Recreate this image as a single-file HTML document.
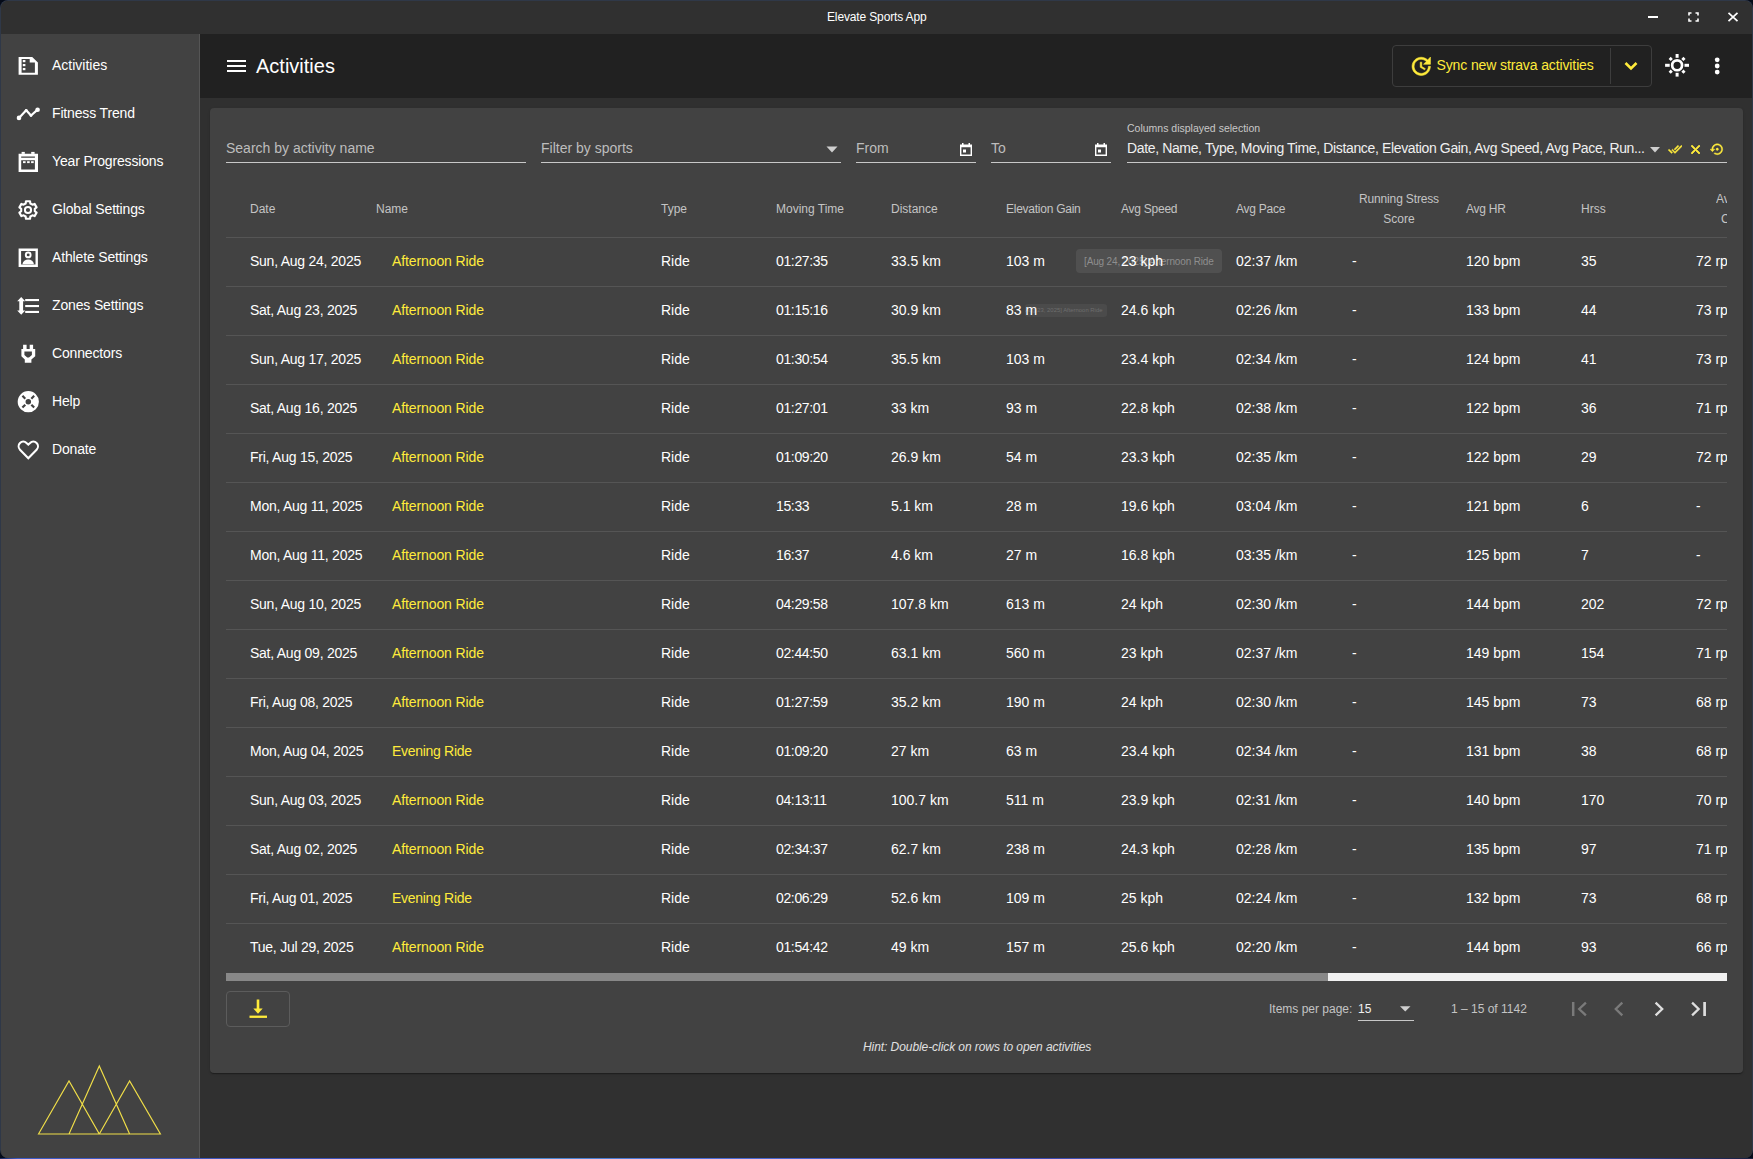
<!DOCTYPE html>
<html><head><meta charset="utf-8">
<style>
*{box-sizing:border-box;margin:0;padding:0}
html,body{width:1753px;height:1159px;overflow:hidden;background:#050b18;font-family:"Liberation Sans",sans-serif}
#win{position:absolute;left:1px;top:1px;width:1751px;height:1157px;background:#303030;border-radius:7px;overflow:hidden}
.t{position:absolute;white-space:nowrap;line-height:0;height:0}
.t>span{}
.ic{position:absolute}
#title{position:absolute;left:0;top:0;width:1751px;height:33px;background:#303030}
#side{position:absolute;left:0;top:33px;width:199px;height:1124px;background:#424242;border-right:1px solid #555}
#tool{position:absolute;left:199px;top:33px;width:1552px;height:64px;background:#212121}
#card{position:absolute;left:209px;top:107px;width:1533px;height:965px;background:#424242;border-radius:4px;box-shadow:0 2px 1px -1px rgba(0,0,0,.2),0 1px 1px 0 rgba(0,0,0,.14),0 1px 3px 0 rgba(0,0,0,.12)}
.hl{position:absolute;left:226px;width:1501px;height:1px;background:#555}
.clipc{clip-path:inset(-20px 0 -20px 0)}
#clipbox{position:absolute;left:0;top:0;width:1727px;height:1159px;overflow:hidden}
</style></head><body>
<div style="position:absolute;left:0;top:1158px;width:1753px;height:1px;background:linear-gradient(90deg,#1a2a60 0%,#3d5cc8 1%,#3a52b8 20%,#4a8ad0 30%,#4a6ed8 40%,#3a4ab0 60%,#5a8ac8 75%,#3a50b8 90%,#1a2040 100%)"></div>
<div style="position:absolute;left:0;top:0;width:1753px;height:1158px;border-radius:8px;background:#2f3848"></div>
<div id="win">
<div id="title"></div>
<div id="side"></div>
<div id="tool"></div>
<div id="card"></div>
</div>
<div id="abs" style="position:absolute;left:0;top:0;width:1753px;height:1159px">
<div class="t " style="left:827px;top:16.84px;font-size:12px;color:#ffffff;letter-spacing:-0.14px">Elevate Sports App</div>
<div class="t " style="left:256px;top:66.07px;font-size:20px;color:#ffffff;">Activities</div>
<div class="hl" style="top:237px"></div>
<div style="position:absolute;left:227px;top:60px;width:19px;height:2px;background:#fff"></div>
<div style="position:absolute;left:227px;top:65px;width:19px;height:2px;background:#fff"></div>
<div style="position:absolute;left:227px;top:70px;width:19px;height:2px;background:#fff"></div>
<div style="position:absolute;left:1648px;top:16px;width:10px;height:2px;background:#fff"></div>
<svg class="ic" style="left:1688px;top:12px" width="11" height="10" viewBox="0 0 11 10" fill="none" stroke="#fff" stroke-width="1.6"><path d="M1 3.5V1h2.5M7.5 1H10v2.5M10 6.5V9H7.5M3.5 9H1V6.5"/></svg>
<svg class="ic" style="left:1727px;top:12px" width="12" height="10" viewBox="0 0 12 10" fill="none" stroke="#fff" stroke-width="1.7"><path d="M1.5 0.8L10.5 9.2M10.5 0.8L1.5 9.2"/></svg>
<div style="position:absolute;left:1392px;top:45px;width:260px;height:42px;border:1px solid #3d3d3d;border-radius:4px"></div>
<div style="position:absolute;left:1610px;top:48px;width:1px;height:36px;background:#3d3d3d"></div>
<svg class="ic" style="left:1409px;top:54px" width="24.5" height="24.5" viewBox="0 0 24 24" fill="#ffeb3b" stroke="#ffeb3b" stroke-width="0.55"><path d="M21 10.12h-6.78l2.74-2.82c-2.73-2.7-7.15-2.8-9.88-.1-2.73 2.71-2.73 7.08 0 9.79s7.15 2.71 9.88 0C18.32 15.65 19 14.08 19 12.1h2c0 1.980-.88 4.55-2.64 6.29-3.51 3.48-9.21 3.48-12.720 0-3.5-3.47-3.53-9.11-.02-12.58s9.14-3.47 12.65 0L21 3v7.12zM12.5 8v4.25l3.5 2.08-.72 1.21L11 13V8h1.5z"/></svg>
<div class="t " style="left:1436.5px;top:65.15px;font-size:14px;color:#ffeb3b;letter-spacing:-0.12px">Sync new strava activities</div>
<svg class="ic" style="left:1619px;top:54px" width="24" height="24" viewBox="0 0 24 24" fill="none" stroke="#ffeb3b" stroke-width="2.6"><path d="M6.5 9l5.5 5.5L17.5 9"/></svg>
<svg class="ic" style="left:1665px;top:53px" width="24" height="24" viewBox="0 0 24 24" fill="#fff"><circle cx="12.1" cy="12.3" r="4.95" fill="none" stroke="#fff" stroke-width="2.7"/><rect x="10.6" y="1" width="3" height="3.8"/><rect x="10.6" y="19.8" width="3" height="3.8"/><rect x="0.1" y="10.8" width="4.6" height="3"/><rect x="19.5" y="10.8" width="4.6" height="3"/><g transform="rotate(45 12.1 12.3)"><rect x="10.6" y="1.8" width="3" height="3"/><rect x="10.6" y="19.8" width="3" height="3"/><rect x="1.6" y="10.8" width="3" height="3"/><rect x="19.6" y="10.8" width="3" height="3"/></g></svg>
<svg class="ic" style="left:1710px;top:54px" width="14" height="24" viewBox="1710 54 14 24" fill="#fff"><circle cx="1717.2" cy="59.8" r="2.4"/><circle cx="1717.2" cy="66" r="2.4"/><circle cx="1717.2" cy="72.1" r="2.4"/></svg>
<div class="t " style="left:226px;top:148.15px;font-size:14px;color:#bdbdbd;">Search by activity name</div>
<div style="position:absolute;left:226px;top:162px;width:300px;height:1px;background:#c8c8c8"></div>
<div class="t " style="left:541px;top:148.15px;font-size:14px;color:#bdbdbd;">Filter by sports</div>
<div style="position:absolute;left:541px;top:162px;width:300px;height:1px;background:#c8c8c8"></div>
<svg class="ic" style="left:826px;top:146px" width="12" height="7" viewBox="0 0 12 7" fill="#cfcfcf"><path d="M0.5 0.5h11L6 6.5z"/></svg>
<div class="t " style="left:856px;top:148.15px;font-size:14px;color:#bdbdbd;">From</div>
<div style="position:absolute;left:856px;top:162px;width:120px;height:1px;background:#c8c8c8"></div>
<div class="t " style="left:991px;top:148.15px;font-size:14px;color:#bdbdbd;">To</div>
<div style="position:absolute;left:991px;top:162px;width:120px;height:1px;background:#c8c8c8"></div>
<svg class="ic" style="left:960px;top:143px" width="12" height="13" viewBox="0 0 12 13" fill="#fff"><path d="M2 0h1.5v1.5h5V0H10v1.5h2V13H0V1.5h2z M1.4 4.2v7.4h9.2V4.2z" fill-rule="evenodd"/><rect x="3" y="6.5" width="3" height="3"/></svg>
<svg class="ic" style="left:1095px;top:143px" width="12" height="13" viewBox="0 0 12 13" fill="#fff"><path d="M2 0h1.5v1.5h5V0H10v1.5h2V13H0V1.5h2z M1.4 4.2v7.4h9.2V4.2z" fill-rule="evenodd"/><rect x="3" y="6.5" width="3" height="3"/></svg>
<div class="t " style="left:1127px;top:128.36px;font-size:10.5px;color:#c8c8c8;">Columns displayed selection</div>
<div class="t " style="left:1127px;top:148.15px;font-size:14px;color:#f0f0f0;letter-spacing:-0.36px">Date, Name, Type, Moving Time, Distance, Elevation Gain, Avg Speed, Avg Pace, Run...</div>
<div style="position:absolute;left:1127px;top:162px;width:600px;height:1px;background:#c8c8c8"></div>
<svg class="ic" style="left:1650px;top:147px" width="10" height="6" viewBox="0 0 10 6" fill="#cfcfcf"><path d="M0 0h10L5 5.5z"/></svg>
<svg class="ic" style="left:1667.65px;top:141.6px" width="14.4" height="14.4" viewBox="0 0 24 24" fill="#ffeb3b" stroke="#ffeb3b" stroke-width="0.9"><path d="M18 7l-1.41-1.41-6.34 6.34 1.41 1.41L18 7zm4.24-1.41L11.66 16.17 7.48 12l-1.41 1.41L11.66 19l12-12-1.42-1.41zM.41 13.41L6 19l1.41-1.41L1.83 12 .41 13.41z"/></svg>
<svg class="ic" style="left:1687.85px;top:141.85px" width="15.1" height="15.1" viewBox="0 0 24 24" fill="#ffeb3b" stroke="#ffeb3b" stroke-width="1.3" stroke-linejoin="miter"><path d="M19 6.41L17.59 5 12 10.59 6.41 5 5 6.41 10.59 12 5 17.59 6.41 19 12 13.41 17.59 19 19 17.59 13.41 12z"/></svg>
<svg class="ic" style="left:1710px;top:141.6px" width="14.5" height="14.5" viewBox="0 0 24 24" fill="#ffeb3b" stroke="#ffeb3b" stroke-width="0.7"><path d="M14 12c0-1.1-.9-2-2-2s-2 .9-2 2 .9 2 2 2 2-.9 2-2zm-2-9c-4.97 0-9 4.03-9 9H0l4 4 4-4H5c0-3.870 3.13-7 7-7s7 3.13 7 7-3.13 7-7 7c-1.51 0-2.91-.49-4.060-1.3l-1.42 1.44C8.04 20.3 9.94 21 12 21c4.97 0 9-4.03 9-9s-4.03-9-9-9z"/></svg>
<div style="position:absolute;left:226px;top:973px;width:1501px;height:8px;background:#f1f1f1"></div>
<div style="position:absolute;left:226px;top:973px;width:1102px;height:8px;background:#888"></div>
<div style="position:absolute;left:226px;top:991px;width:64px;height:36px;border:1px solid #5c5c5c;border-radius:4px"></div>
<svg class="ic" style="left:246px;top:997px" width="24" height="24" viewBox="0 0 24 24" fill="#ffeb3b"><rect x="10.7" y="2.5" width="2.6" height="10"/><path d="M7.3 11.5h9.4L12 16.7z"/><rect x="3.5" y="18.6" width="17.5" height="2.3"/></svg>
<div class="t " style="left:1269px;top:1008.84px;font-size:12px;color:#c4c4c4;">Items per page:</div>
<div class="t " style="left:1358px;top:1008.84px;font-size:12px;color:#f0f0f0;">15</div>
<div style="position:absolute;left:1358px;top:1020px;width:56px;height:1px;background:#c8c8c8"></div>
<svg class="ic" style="left:1400px;top:1006px" width="11" height="6" viewBox="0 0 11 6" fill="#cfcfcf"><path d="M0 0.3h10.5L5.25 5.6z"/></svg>
<div class="t " style="left:1451px;top:1008.84px;font-size:12px;color:#c4c4c4;">1 – 15 of 1142</div>
<svg class="ic" style="left:1560px;top:990px" width="160" height="40" viewBox="1560 990 160 40" fill="none" stroke-width="2.3"><path d="M1573.2 1002V1016" stroke="#7a7a7a" stroke-width="2.5"/><path d="M1585.9 1002.7L1579.2 1009L1585.9 1015.3" stroke="#7a7a7a"/><path d="M1622.3 1002.7L1615.8 1009L1622.3 1015.3" stroke="#7a7a7a"/><path d="M1655.6 1002.7L1662.2 1009L1655.6 1015.3" stroke="#dedede"/><path d="M1692.1 1002.7L1698.6 1009L1692.1 1015.3" stroke="#dedede"/><path d="M1704.6 1002V1016" stroke="#dedede" stroke-width="2.7"/></svg>
<div class="t " style="left:863px;top:1046.84px;font-size:12px;color:#e0e0e0;font-style:italic;letter-spacing:-0.07px">Hint: Double-click on rows to open activities</div>
<svg class="ic" style="left:0;top:1040px" width="200" height="110" viewBox="0 1040 200 110" fill="none" stroke="#f0de48" stroke-width="1.15" stroke-linejoin="miter"><path d="M38.5 1134L69 1081L99.3 1134Z M69 1134L99.3 1066L129.6 1134Z M99.3 1134L129.6 1081L160.4 1134Z"/></svg>
<div style="position:absolute;left:1076px;top:249px;width:146px;height:24px;border-radius:4px;background:rgba(97,97,97,.45)"></div>
<div class="t " style="left:1084px;top:261.54px;font-size:10px;color:#8e8e8e;letter-spacing:-0.15px">[Aug 24, 2025] Afternoon Ride</div>
<div style="position:absolute;left:1025px;top:304px;width:82px;height:13px;border-radius:3px;background:rgba(97,97,97,.3);overflow:hidden"><div style="position:absolute;left:-1.5px;top:3px;font-size:5.9px;line-height:7px;white-space:nowrap;color:#6e6e6e">[Aug 23, 2025] Afternoon Ride</div></div>
<div id="clipbox">
<svg class="ic" style="left:16px;top:53px" width="24" height="24" viewBox="0 0 24 24" fill="#fff"><path d="M2.6 3.9H16.2L21.9 9.6V21.8H2.6Z M5.6 6V19.8H18.9V9.4H13.7V6Z" fill-rule="evenodd"/><rect x="6.8" y="7" width="2.6" height="2.2"/><rect x="6.8" y="11" width="2.6" height="2.2"/><rect x="6.8" y="15" width="2.6" height="2.2"/></svg>
<div class="t " style="left:52px;top:65.15px;font-size:14px;color:#ffffff;">Activities</div>
<svg class="ic" style="left:16px;top:101px" width="24" height="24" viewBox="0 0 24 24" fill="#fff"><polyline points="3,16.9 10.2,9.3 15,14.5 21.6,8.7" fill="none" stroke="#fff" stroke-width="2.2" stroke-linejoin="round"/><circle cx="3" cy="16.9" r="2.3"/><circle cx="10.2" cy="9.3" r="1.4"/><circle cx="15" cy="14.5" r="1.4"/><circle cx="21.6" cy="8.7" r="2.3"/></svg>
<div class="t " style="left:52px;top:113.15px;font-size:14px;color:#ffffff;letter-spacing:-0.15px">Fitness Trend</div>
<svg class="ic" style="left:16px;top:149px" width="24" height="24" viewBox="0 0 24 24" fill="#fff"><path d="M2.6 4.8H22V23.1H2.6Z M5.2 11.2V20.6H18.9V11.2Z M5.2 7.4V8.8H18.9V7.4Z" fill-rule="evenodd"/><rect x="5.6" y="2.9" width="3.2" height="2"/><rect x="15.2" y="2.9" width="3.4" height="2"/><rect x="7" y="12.2" width="2.6" height="1.9"/><rect x="11.1" y="12.2" width="2.6" height="1.9"/><rect x="15.1" y="12.2" width="2.6" height="1.9"/></svg>
<div class="t " style="left:52px;top:161.15px;font-size:14px;color:#ffffff;letter-spacing:-0.15px">Year Progressions</div>
<svg class="ic" style="left:16px;top:197px" width="24" height="24" viewBox="0 0 24 24" fill="#fff"><path d="M14.36 6.52 L14.02 4.23 L9.98 4.23 L9.64 6.52 L7.56 7.71 L5.42 6.86 L3.39 10.37 L5.20 11.80 L5.20 14.20 L3.39 15.63 L5.42 19.14 L7.56 18.29 L9.64 19.48 L9.98 21.77 L14.02 21.77 L14.36 19.48 L16.44 18.29 L18.58 19.14 L20.61 15.63 L18.80 14.20 L18.80 11.80 L20.61 10.37 L18.58 6.86 L16.44 7.71Z" fill="none" stroke="#fff" stroke-width="2.1" stroke-linejoin="round"/><circle cx="12" cy="13" r="3.1" fill="none" stroke="#fff" stroke-width="2"/></svg>
<div class="t " style="left:52px;top:209.15px;font-size:14px;color:#ffffff;letter-spacing:-0.15px">Global Settings</div>
<svg class="ic" style="left:16px;top:245px" width="24" height="24" viewBox="0 0 24 24" fill="#fff"><path d="M2.6 3.6H21.9V21.9H2.6Z M5.1 6V19.5H19.5V6Z" fill-rule="evenodd"/><circle cx="12.2" cy="9.9" r="2.4" fill="none" stroke="#fff" stroke-width="1.9"/><path d="M6.4 19.2C6.8 16.4 9.3 14.6 12.2 14.6S17.6 16.4 18 19.2Z"/></svg>
<div class="t " style="left:52px;top:257.15px;font-size:14px;color:#ffffff;letter-spacing:-0.15px">Athlete Settings</div>
<svg class="ic" style="left:16px;top:293px" width="24" height="24" viewBox="0 0 24 24" fill="#fff"><path d="M5.2 3.9L9.2 8.3H7.1V17.4H9.2L5.2 21.8L1.2 17.4H3.3V8.3H1.2Z"/><rect x="9.2" y="6" width="13.8" height="2.1"/><rect x="9.2" y="12" width="13.8" height="2.1"/><rect x="9.2" y="17.9" width="13.8" height="2.1"/></svg>
<div class="t " style="left:52px;top:305.15px;font-size:14px;color:#ffffff;letter-spacing:-0.15px">Zones Settings</div>
<svg class="ic" style="left:16px;top:341px" width="24" height="24" viewBox="0 0 24 24" fill="#fff"><path d="M7.1 3.8H10.6V8H13.7V3.8H17.1V8H19.2V15.2L15.4 18.6V21.8H8.8V18.6L5.4 15.2V8H7.1Z M8.4 10.6V14.1L11.2 16.6H13L15.9 14.1V10.6Z" fill-rule="evenodd"/></svg>
<div class="t " style="left:52px;top:353.15px;font-size:14px;color:#ffffff;letter-spacing:-0.15px">Connectors</div>
<svg class="ic" style="left:16px;top:389px" width="24" height="24" viewBox="0 0 24 24" fill="#fff"><path d="M12.3 2.1A10.6 10.6 0 1 1 12.3 23.3A10.6 10.6 0 1 1 12.3 2.1Z M12.3 9.95A2.75 2.75 0 1 0 12.3 15.45A2.75 2.75 0 1 0 12.3 9.95Z" fill-rule="evenodd"/><g stroke="#424242" stroke-width="2.2" stroke-linecap="butt"><path d="M6.43 6.83L9.26 9.66M18.17 6.83L15.34 9.66M6.43 18.57L9.26 15.74M18.17 18.57L15.34 15.74"/></g></svg>
<div class="t " style="left:52px;top:401.15px;font-size:14px;color:#ffffff;letter-spacing:-0.15px">Help</div>
<svg class="ic" style="left:16px;top:437px" width="24" height="24" viewBox="0 0 24 24" fill="#fff"><path d="M12.3 21.2L4 12.7C2.2 10.8 2.2 7.8 4 6C5.8 4.2 8.7 4.2 10.5 6L12.3 7.6L14.1 6C15.9 4.2 18.8 4.2 20.6 6C22.4 7.8 22.4 10.8 20.6 12.7Z" fill="none" stroke="#fff" stroke-width="2.1" stroke-linejoin="miter"/></svg>
<div class="t " style="left:52px;top:449.15px;font-size:14px;color:#ffffff;letter-spacing:-0.15px">Donate</div>
<div class="t " style="left:250px;top:208.84px;font-size:12px;color:#c4c4c4;">Date</div>
<div class="t " style="left:376px;top:208.84px;font-size:12px;color:#c4c4c4;">Name</div>
<div class="t " style="left:661px;top:208.84px;font-size:12px;color:#c4c4c4;">Type</div>
<div class="t " style="left:776px;top:208.84px;font-size:12px;color:#c4c4c4;">Moving Time</div>
<div class="t " style="left:891px;top:208.84px;font-size:12px;color:#c4c4c4;">Distance</div>
<div class="t " style="left:1006px;top:208.84px;font-size:12px;color:#c4c4c4;letter-spacing:-0.25px">Elevation Gain</div>
<div class="t " style="left:1121px;top:208.84px;font-size:12px;color:#c4c4c4;letter-spacing:-0.25px">Avg Speed</div>
<div class="t " style="left:1236px;top:208.84px;font-size:12px;color:#c4c4c4;letter-spacing:-0.25px">Avg Pace</div>
<div class="t " style="left:1466px;top:208.84px;font-size:12px;color:#c4c4c4;letter-spacing:-0.25px">Avg HR</div>
<div class="t " style="left:1581px;top:208.84px;font-size:12px;color:#c4c4c4;">Hrss</div>
<div class="t" style="left:1340px;top:198.84px;width:118px;text-align:center;font-size:12px;letter-spacing:-0.15px;color:#c4c4c4">Running Stress</div>
<div class="t" style="left:1340px;top:218.84px;width:118px;text-align:center;font-size:12px;color:#c4c4c4">Score</div>
<div class="t clipc" style="left:1716px;top:198.84px;font-size:12px;color:#c4c4c4;">Av</div>
<div class="t clipc" style="left:1721px;top:218.84px;font-size:12px;color:#c4c4c4;">C</div>
<div class="t " style="left:250px;top:261.15px;font-size:14px;color:#ffffff;letter-spacing:-0.25px">Sun, Aug 24, 2025</div>
<div class="t " style="left:392px;top:261.15px;font-size:14px;color:#ffeb3b;letter-spacing:-0.1px">Afternoon Ride</div>
<div class="t " style="left:661px;top:261.15px;font-size:14px;color:#ffffff;">Ride</div>
<div class="t " style="left:776px;top:261.15px;font-size:14px;color:#ffffff;letter-spacing:-0.35px">01:27:35</div>
<div class="t " style="left:891px;top:261.15px;font-size:14px;color:#ffffff;">33.5 km</div>
<div class="t " style="left:1006px;top:261.15px;font-size:14px;color:#ffffff;">103 m</div>
<div class="t " style="left:1121px;top:261.15px;font-size:14px;color:#ffffff;">23 kph</div>
<div class="t " style="left:1236px;top:261.15px;font-size:14px;color:#ffffff;">02:37 /km</div>
<div class="t " style="left:1352px;top:261.15px;font-size:14px;color:#ffffff;">-</div>
<div class="t " style="left:1466px;top:261.15px;font-size:14px;color:#ffffff;">120 bpm</div>
<div class="t " style="left:1581px;top:261.15px;font-size:14px;color:#ffffff;">35</div>
<div class="t clipc" style="left:1696px;top:261.15px;font-size:14px;color:#ffffff;">72 rp</div>
<div class="hl" style="top:286px"></div>
<div class="t " style="left:250px;top:310.15px;font-size:14px;color:#ffffff;letter-spacing:-0.25px">Sat, Aug 23, 2025</div>
<div class="t " style="left:392px;top:310.15px;font-size:14px;color:#ffeb3b;letter-spacing:-0.1px">Afternoon Ride</div>
<div class="t " style="left:661px;top:310.15px;font-size:14px;color:#ffffff;">Ride</div>
<div class="t " style="left:776px;top:310.15px;font-size:14px;color:#ffffff;letter-spacing:-0.35px">01:15:16</div>
<div class="t " style="left:891px;top:310.15px;font-size:14px;color:#ffffff;">30.9 km</div>
<div class="t " style="left:1006px;top:310.15px;font-size:14px;color:#ffffff;">83 m</div>
<div class="t " style="left:1121px;top:310.15px;font-size:14px;color:#ffffff;">24.6 kph</div>
<div class="t " style="left:1236px;top:310.15px;font-size:14px;color:#ffffff;">02:26 /km</div>
<div class="t " style="left:1352px;top:310.15px;font-size:14px;color:#ffffff;">-</div>
<div class="t " style="left:1466px;top:310.15px;font-size:14px;color:#ffffff;">133 bpm</div>
<div class="t " style="left:1581px;top:310.15px;font-size:14px;color:#ffffff;">44</div>
<div class="t clipc" style="left:1696px;top:310.15px;font-size:14px;color:#ffffff;">73 rp</div>
<div class="hl" style="top:335px"></div>
<div class="t " style="left:250px;top:359.15px;font-size:14px;color:#ffffff;letter-spacing:-0.25px">Sun, Aug 17, 2025</div>
<div class="t " style="left:392px;top:359.15px;font-size:14px;color:#ffeb3b;letter-spacing:-0.1px">Afternoon Ride</div>
<div class="t " style="left:661px;top:359.15px;font-size:14px;color:#ffffff;">Ride</div>
<div class="t " style="left:776px;top:359.15px;font-size:14px;color:#ffffff;letter-spacing:-0.35px">01:30:54</div>
<div class="t " style="left:891px;top:359.15px;font-size:14px;color:#ffffff;">35.5 km</div>
<div class="t " style="left:1006px;top:359.15px;font-size:14px;color:#ffffff;">103 m</div>
<div class="t " style="left:1121px;top:359.15px;font-size:14px;color:#ffffff;">23.4 kph</div>
<div class="t " style="left:1236px;top:359.15px;font-size:14px;color:#ffffff;">02:34 /km</div>
<div class="t " style="left:1352px;top:359.15px;font-size:14px;color:#ffffff;">-</div>
<div class="t " style="left:1466px;top:359.15px;font-size:14px;color:#ffffff;">124 bpm</div>
<div class="t " style="left:1581px;top:359.15px;font-size:14px;color:#ffffff;">41</div>
<div class="t clipc" style="left:1696px;top:359.15px;font-size:14px;color:#ffffff;">73 rp</div>
<div class="hl" style="top:384px"></div>
<div class="t " style="left:250px;top:408.15px;font-size:14px;color:#ffffff;letter-spacing:-0.25px">Sat, Aug 16, 2025</div>
<div class="t " style="left:392px;top:408.15px;font-size:14px;color:#ffeb3b;letter-spacing:-0.1px">Afternoon Ride</div>
<div class="t " style="left:661px;top:408.15px;font-size:14px;color:#ffffff;">Ride</div>
<div class="t " style="left:776px;top:408.15px;font-size:14px;color:#ffffff;letter-spacing:-0.35px">01:27:01</div>
<div class="t " style="left:891px;top:408.15px;font-size:14px;color:#ffffff;">33 km</div>
<div class="t " style="left:1006px;top:408.15px;font-size:14px;color:#ffffff;">93 m</div>
<div class="t " style="left:1121px;top:408.15px;font-size:14px;color:#ffffff;">22.8 kph</div>
<div class="t " style="left:1236px;top:408.15px;font-size:14px;color:#ffffff;">02:38 /km</div>
<div class="t " style="left:1352px;top:408.15px;font-size:14px;color:#ffffff;">-</div>
<div class="t " style="left:1466px;top:408.15px;font-size:14px;color:#ffffff;">122 bpm</div>
<div class="t " style="left:1581px;top:408.15px;font-size:14px;color:#ffffff;">36</div>
<div class="t clipc" style="left:1696px;top:408.15px;font-size:14px;color:#ffffff;">71 rp</div>
<div class="hl" style="top:433px"></div>
<div class="t " style="left:250px;top:457.15px;font-size:14px;color:#ffffff;letter-spacing:-0.25px">Fri, Aug 15, 2025</div>
<div class="t " style="left:392px;top:457.15px;font-size:14px;color:#ffeb3b;letter-spacing:-0.1px">Afternoon Ride</div>
<div class="t " style="left:661px;top:457.15px;font-size:14px;color:#ffffff;">Ride</div>
<div class="t " style="left:776px;top:457.15px;font-size:14px;color:#ffffff;letter-spacing:-0.35px">01:09:20</div>
<div class="t " style="left:891px;top:457.15px;font-size:14px;color:#ffffff;">26.9 km</div>
<div class="t " style="left:1006px;top:457.15px;font-size:14px;color:#ffffff;">54 m</div>
<div class="t " style="left:1121px;top:457.15px;font-size:14px;color:#ffffff;">23.3 kph</div>
<div class="t " style="left:1236px;top:457.15px;font-size:14px;color:#ffffff;">02:35 /km</div>
<div class="t " style="left:1352px;top:457.15px;font-size:14px;color:#ffffff;">-</div>
<div class="t " style="left:1466px;top:457.15px;font-size:14px;color:#ffffff;">122 bpm</div>
<div class="t " style="left:1581px;top:457.15px;font-size:14px;color:#ffffff;">29</div>
<div class="t clipc" style="left:1696px;top:457.15px;font-size:14px;color:#ffffff;">72 rp</div>
<div class="hl" style="top:482px"></div>
<div class="t " style="left:250px;top:506.15px;font-size:14px;color:#ffffff;letter-spacing:-0.25px">Mon, Aug 11, 2025</div>
<div class="t " style="left:392px;top:506.15px;font-size:14px;color:#ffeb3b;letter-spacing:-0.1px">Afternoon Ride</div>
<div class="t " style="left:661px;top:506.15px;font-size:14px;color:#ffffff;">Ride</div>
<div class="t " style="left:776px;top:506.15px;font-size:14px;color:#ffffff;letter-spacing:-0.35px">15:33</div>
<div class="t " style="left:891px;top:506.15px;font-size:14px;color:#ffffff;">5.1 km</div>
<div class="t " style="left:1006px;top:506.15px;font-size:14px;color:#ffffff;">28 m</div>
<div class="t " style="left:1121px;top:506.15px;font-size:14px;color:#ffffff;">19.6 kph</div>
<div class="t " style="left:1236px;top:506.15px;font-size:14px;color:#ffffff;">03:04 /km</div>
<div class="t " style="left:1352px;top:506.15px;font-size:14px;color:#ffffff;">-</div>
<div class="t " style="left:1466px;top:506.15px;font-size:14px;color:#ffffff;">121 bpm</div>
<div class="t " style="left:1581px;top:506.15px;font-size:14px;color:#ffffff;">6</div>
<div class="t clipc" style="left:1696px;top:506.15px;font-size:14px;color:#ffffff;">-</div>
<div class="hl" style="top:531px"></div>
<div class="t " style="left:250px;top:555.15px;font-size:14px;color:#ffffff;letter-spacing:-0.25px">Mon, Aug 11, 2025</div>
<div class="t " style="left:392px;top:555.15px;font-size:14px;color:#ffeb3b;letter-spacing:-0.1px">Afternoon Ride</div>
<div class="t " style="left:661px;top:555.15px;font-size:14px;color:#ffffff;">Ride</div>
<div class="t " style="left:776px;top:555.15px;font-size:14px;color:#ffffff;letter-spacing:-0.35px">16:37</div>
<div class="t " style="left:891px;top:555.15px;font-size:14px;color:#ffffff;">4.6 km</div>
<div class="t " style="left:1006px;top:555.15px;font-size:14px;color:#ffffff;">27 m</div>
<div class="t " style="left:1121px;top:555.15px;font-size:14px;color:#ffffff;">16.8 kph</div>
<div class="t " style="left:1236px;top:555.15px;font-size:14px;color:#ffffff;">03:35 /km</div>
<div class="t " style="left:1352px;top:555.15px;font-size:14px;color:#ffffff;">-</div>
<div class="t " style="left:1466px;top:555.15px;font-size:14px;color:#ffffff;">125 bpm</div>
<div class="t " style="left:1581px;top:555.15px;font-size:14px;color:#ffffff;">7</div>
<div class="t clipc" style="left:1696px;top:555.15px;font-size:14px;color:#ffffff;">-</div>
<div class="hl" style="top:580px"></div>
<div class="t " style="left:250px;top:604.15px;font-size:14px;color:#ffffff;letter-spacing:-0.25px">Sun, Aug 10, 2025</div>
<div class="t " style="left:392px;top:604.15px;font-size:14px;color:#ffeb3b;letter-spacing:-0.1px">Afternoon Ride</div>
<div class="t " style="left:661px;top:604.15px;font-size:14px;color:#ffffff;">Ride</div>
<div class="t " style="left:776px;top:604.15px;font-size:14px;color:#ffffff;letter-spacing:-0.35px">04:29:58</div>
<div class="t " style="left:891px;top:604.15px;font-size:14px;color:#ffffff;">107.8 km</div>
<div class="t " style="left:1006px;top:604.15px;font-size:14px;color:#ffffff;">613 m</div>
<div class="t " style="left:1121px;top:604.15px;font-size:14px;color:#ffffff;">24 kph</div>
<div class="t " style="left:1236px;top:604.15px;font-size:14px;color:#ffffff;">02:30 /km</div>
<div class="t " style="left:1352px;top:604.15px;font-size:14px;color:#ffffff;">-</div>
<div class="t " style="left:1466px;top:604.15px;font-size:14px;color:#ffffff;">144 bpm</div>
<div class="t " style="left:1581px;top:604.15px;font-size:14px;color:#ffffff;">202</div>
<div class="t clipc" style="left:1696px;top:604.15px;font-size:14px;color:#ffffff;">72 rp</div>
<div class="hl" style="top:629px"></div>
<div class="t " style="left:250px;top:653.15px;font-size:14px;color:#ffffff;letter-spacing:-0.25px">Sat, Aug 09, 2025</div>
<div class="t " style="left:392px;top:653.15px;font-size:14px;color:#ffeb3b;letter-spacing:-0.1px">Afternoon Ride</div>
<div class="t " style="left:661px;top:653.15px;font-size:14px;color:#ffffff;">Ride</div>
<div class="t " style="left:776px;top:653.15px;font-size:14px;color:#ffffff;letter-spacing:-0.35px">02:44:50</div>
<div class="t " style="left:891px;top:653.15px;font-size:14px;color:#ffffff;">63.1 km</div>
<div class="t " style="left:1006px;top:653.15px;font-size:14px;color:#ffffff;">560 m</div>
<div class="t " style="left:1121px;top:653.15px;font-size:14px;color:#ffffff;">23 kph</div>
<div class="t " style="left:1236px;top:653.15px;font-size:14px;color:#ffffff;">02:37 /km</div>
<div class="t " style="left:1352px;top:653.15px;font-size:14px;color:#ffffff;">-</div>
<div class="t " style="left:1466px;top:653.15px;font-size:14px;color:#ffffff;">149 bpm</div>
<div class="t " style="left:1581px;top:653.15px;font-size:14px;color:#ffffff;">154</div>
<div class="t clipc" style="left:1696px;top:653.15px;font-size:14px;color:#ffffff;">71 rp</div>
<div class="hl" style="top:678px"></div>
<div class="t " style="left:250px;top:702.15px;font-size:14px;color:#ffffff;letter-spacing:-0.25px">Fri, Aug 08, 2025</div>
<div class="t " style="left:392px;top:702.15px;font-size:14px;color:#ffeb3b;letter-spacing:-0.1px">Afternoon Ride</div>
<div class="t " style="left:661px;top:702.15px;font-size:14px;color:#ffffff;">Ride</div>
<div class="t " style="left:776px;top:702.15px;font-size:14px;color:#ffffff;letter-spacing:-0.35px">01:27:59</div>
<div class="t " style="left:891px;top:702.15px;font-size:14px;color:#ffffff;">35.2 km</div>
<div class="t " style="left:1006px;top:702.15px;font-size:14px;color:#ffffff;">190 m</div>
<div class="t " style="left:1121px;top:702.15px;font-size:14px;color:#ffffff;">24 kph</div>
<div class="t " style="left:1236px;top:702.15px;font-size:14px;color:#ffffff;">02:30 /km</div>
<div class="t " style="left:1352px;top:702.15px;font-size:14px;color:#ffffff;">-</div>
<div class="t " style="left:1466px;top:702.15px;font-size:14px;color:#ffffff;">145 bpm</div>
<div class="t " style="left:1581px;top:702.15px;font-size:14px;color:#ffffff;">73</div>
<div class="t clipc" style="left:1696px;top:702.15px;font-size:14px;color:#ffffff;">68 rp</div>
<div class="hl" style="top:727px"></div>
<div class="t " style="left:250px;top:751.15px;font-size:14px;color:#ffffff;letter-spacing:-0.25px">Mon, Aug 04, 2025</div>
<div class="t " style="left:392px;top:751.15px;font-size:14px;color:#ffeb3b;letter-spacing:-0.3px">Evening Ride</div>
<div class="t " style="left:661px;top:751.15px;font-size:14px;color:#ffffff;">Ride</div>
<div class="t " style="left:776px;top:751.15px;font-size:14px;color:#ffffff;letter-spacing:-0.35px">01:09:20</div>
<div class="t " style="left:891px;top:751.15px;font-size:14px;color:#ffffff;">27 km</div>
<div class="t " style="left:1006px;top:751.15px;font-size:14px;color:#ffffff;">63 m</div>
<div class="t " style="left:1121px;top:751.15px;font-size:14px;color:#ffffff;">23.4 kph</div>
<div class="t " style="left:1236px;top:751.15px;font-size:14px;color:#ffffff;">02:34 /km</div>
<div class="t " style="left:1352px;top:751.15px;font-size:14px;color:#ffffff;">-</div>
<div class="t " style="left:1466px;top:751.15px;font-size:14px;color:#ffffff;">131 bpm</div>
<div class="t " style="left:1581px;top:751.15px;font-size:14px;color:#ffffff;">38</div>
<div class="t clipc" style="left:1696px;top:751.15px;font-size:14px;color:#ffffff;">68 rp</div>
<div class="hl" style="top:776px"></div>
<div class="t " style="left:250px;top:800.15px;font-size:14px;color:#ffffff;letter-spacing:-0.25px">Sun, Aug 03, 2025</div>
<div class="t " style="left:392px;top:800.15px;font-size:14px;color:#ffeb3b;letter-spacing:-0.1px">Afternoon Ride</div>
<div class="t " style="left:661px;top:800.15px;font-size:14px;color:#ffffff;">Ride</div>
<div class="t " style="left:776px;top:800.15px;font-size:14px;color:#ffffff;letter-spacing:-0.35px">04:13:11</div>
<div class="t " style="left:891px;top:800.15px;font-size:14px;color:#ffffff;">100.7 km</div>
<div class="t " style="left:1006px;top:800.15px;font-size:14px;color:#ffffff;">511 m</div>
<div class="t " style="left:1121px;top:800.15px;font-size:14px;color:#ffffff;">23.9 kph</div>
<div class="t " style="left:1236px;top:800.15px;font-size:14px;color:#ffffff;">02:31 /km</div>
<div class="t " style="left:1352px;top:800.15px;font-size:14px;color:#ffffff;">-</div>
<div class="t " style="left:1466px;top:800.15px;font-size:14px;color:#ffffff;">140 bpm</div>
<div class="t " style="left:1581px;top:800.15px;font-size:14px;color:#ffffff;">170</div>
<div class="t clipc" style="left:1696px;top:800.15px;font-size:14px;color:#ffffff;">70 rp</div>
<div class="hl" style="top:825px"></div>
<div class="t " style="left:250px;top:849.15px;font-size:14px;color:#ffffff;letter-spacing:-0.25px">Sat, Aug 02, 2025</div>
<div class="t " style="left:392px;top:849.15px;font-size:14px;color:#ffeb3b;letter-spacing:-0.1px">Afternoon Ride</div>
<div class="t " style="left:661px;top:849.15px;font-size:14px;color:#ffffff;">Ride</div>
<div class="t " style="left:776px;top:849.15px;font-size:14px;color:#ffffff;letter-spacing:-0.35px">02:34:37</div>
<div class="t " style="left:891px;top:849.15px;font-size:14px;color:#ffffff;">62.7 km</div>
<div class="t " style="left:1006px;top:849.15px;font-size:14px;color:#ffffff;">238 m</div>
<div class="t " style="left:1121px;top:849.15px;font-size:14px;color:#ffffff;">24.3 kph</div>
<div class="t " style="left:1236px;top:849.15px;font-size:14px;color:#ffffff;">02:28 /km</div>
<div class="t " style="left:1352px;top:849.15px;font-size:14px;color:#ffffff;">-</div>
<div class="t " style="left:1466px;top:849.15px;font-size:14px;color:#ffffff;">135 bpm</div>
<div class="t " style="left:1581px;top:849.15px;font-size:14px;color:#ffffff;">97</div>
<div class="t clipc" style="left:1696px;top:849.15px;font-size:14px;color:#ffffff;">71 rp</div>
<div class="hl" style="top:874px"></div>
<div class="t " style="left:250px;top:898.15px;font-size:14px;color:#ffffff;letter-spacing:-0.25px">Fri, Aug 01, 2025</div>
<div class="t " style="left:392px;top:898.15px;font-size:14px;color:#ffeb3b;letter-spacing:-0.3px">Evening Ride</div>
<div class="t " style="left:661px;top:898.15px;font-size:14px;color:#ffffff;">Ride</div>
<div class="t " style="left:776px;top:898.15px;font-size:14px;color:#ffffff;letter-spacing:-0.35px">02:06:29</div>
<div class="t " style="left:891px;top:898.15px;font-size:14px;color:#ffffff;">52.6 km</div>
<div class="t " style="left:1006px;top:898.15px;font-size:14px;color:#ffffff;">109 m</div>
<div class="t " style="left:1121px;top:898.15px;font-size:14px;color:#ffffff;">25 kph</div>
<div class="t " style="left:1236px;top:898.15px;font-size:14px;color:#ffffff;">02:24 /km</div>
<div class="t " style="left:1352px;top:898.15px;font-size:14px;color:#ffffff;">-</div>
<div class="t " style="left:1466px;top:898.15px;font-size:14px;color:#ffffff;">132 bpm</div>
<div class="t " style="left:1581px;top:898.15px;font-size:14px;color:#ffffff;">73</div>
<div class="t clipc" style="left:1696px;top:898.15px;font-size:14px;color:#ffffff;">68 rp</div>
<div class="hl" style="top:923px"></div>
<div class="t " style="left:250px;top:947.15px;font-size:14px;color:#ffffff;letter-spacing:-0.25px">Tue, Jul 29, 2025</div>
<div class="t " style="left:392px;top:947.15px;font-size:14px;color:#ffeb3b;letter-spacing:-0.1px">Afternoon Ride</div>
<div class="t " style="left:661px;top:947.15px;font-size:14px;color:#ffffff;">Ride</div>
<div class="t " style="left:776px;top:947.15px;font-size:14px;color:#ffffff;letter-spacing:-0.35px">01:54:42</div>
<div class="t " style="left:891px;top:947.15px;font-size:14px;color:#ffffff;">49 km</div>
<div class="t " style="left:1006px;top:947.15px;font-size:14px;color:#ffffff;">157 m</div>
<div class="t " style="left:1121px;top:947.15px;font-size:14px;color:#ffffff;">25.6 kph</div>
<div class="t " style="left:1236px;top:947.15px;font-size:14px;color:#ffffff;">02:20 /km</div>
<div class="t " style="left:1352px;top:947.15px;font-size:14px;color:#ffffff;">-</div>
<div class="t " style="left:1466px;top:947.15px;font-size:14px;color:#ffffff;">144 bpm</div>
<div class="t " style="left:1581px;top:947.15px;font-size:14px;color:#ffffff;">93</div>
<div class="t clipc" style="left:1696px;top:947.15px;font-size:14px;color:#ffffff;">66 rp</div>
</div>
</div>
</body></html>
